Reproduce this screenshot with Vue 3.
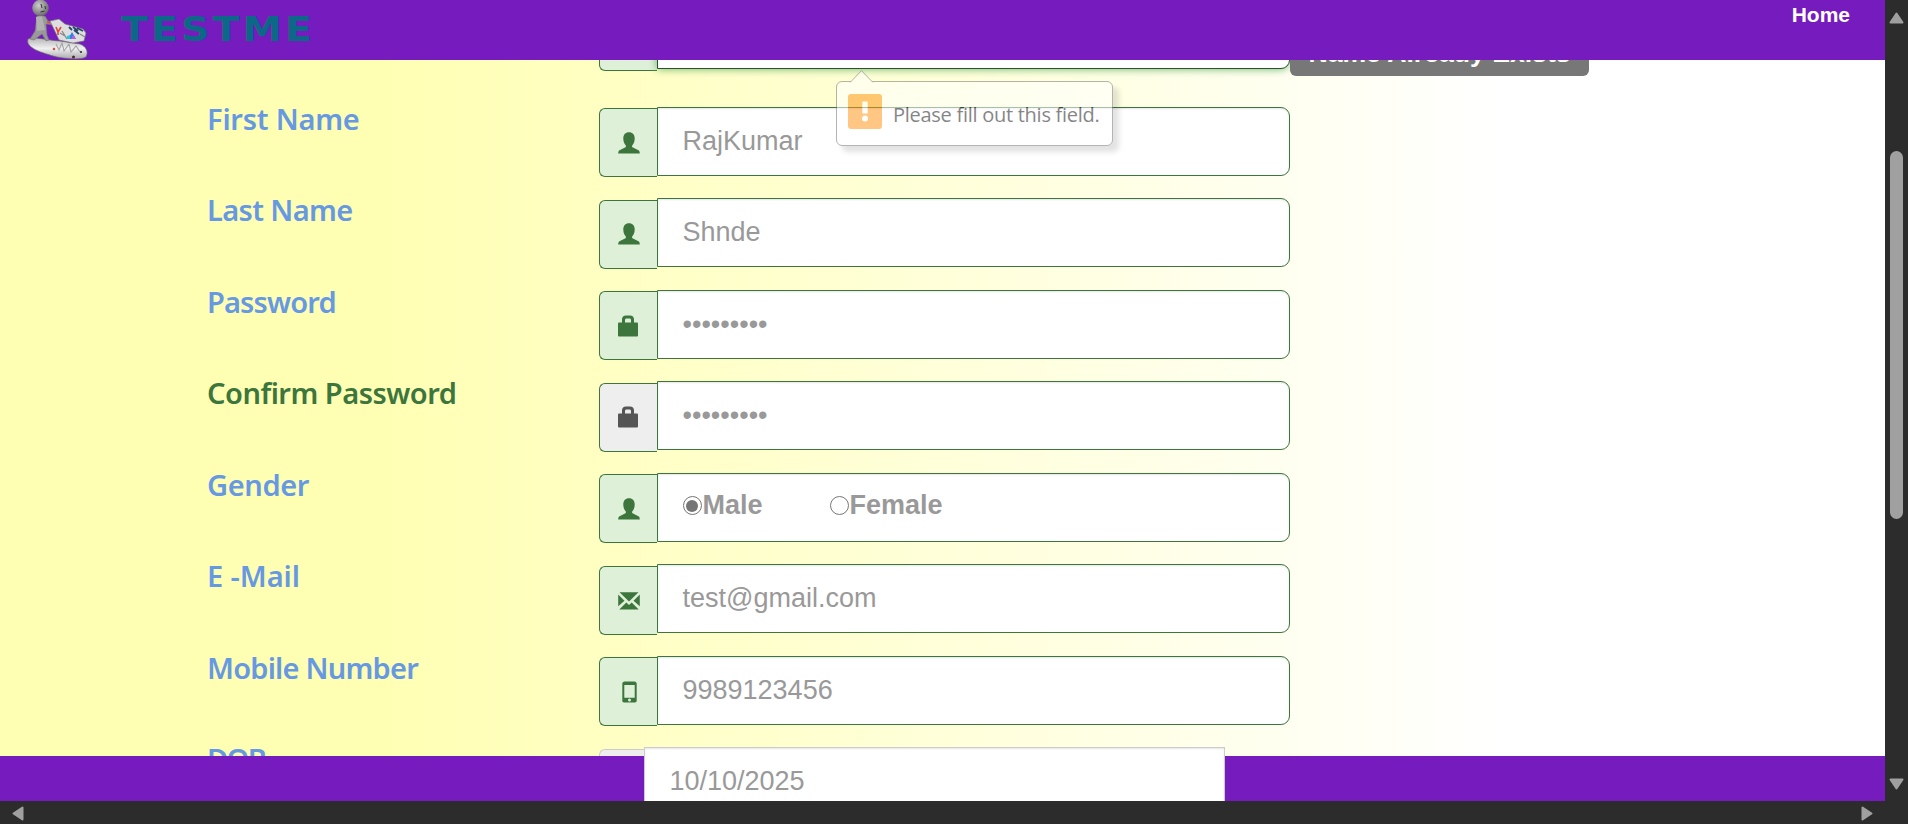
<script setup>
const rows = [
  { label: 'First Name', icon: 'user', value: 'RajKumar', track: '-0.22px' },
  { label: 'Last Name', icon: 'user', value: 'Shnde', track: '-0.63px' },
  { label: 'Password', icon: 'lock', value: '•••••••••', track: '-0.85px' },
  { label: 'Confirm Password', icon: 'lock', value: '•••••••••', track: '-0.5px', pending: true },
  { label: 'Gender', icon: 'user', radios: true, track: '-0.36px' },
  { label: 'E -Mail', icon: 'mail', value: 'test@gmail.com', track: '-0.07px' },
  { label: 'Mobile Number', icon: 'phone', value: '9989123456', track: '-0.77px' },
  { label: 'DOB', icon: '', value: '10/10/2025', track: '-1.7px', date: true },
]
</script>

<template>
  <div class="window">
    <main class="viewport">
      <div class="form">
        <div class="row top-row">
          <div class="label"></div>
          <div class="addon"></div>
          <div class="field focused"></div>
          <div class="badge">Name Already Exists</div>
        </div>
        <div v-for="r in rows" :key="r.label" class="row" :class="{ date: r.date, pending: r.pending }">
          <div class="label" :style="{ letterSpacing: r.track }">{{ r.label }}</div>
          <div class="addon">
            <svg v-if="r.icon === 'user'" width="22" height="22" viewBox="0 0 22 22">
              <path d="M11 .3C7.300.3 5.300 2.800 5.300 6.400c0 2.700.9 5.400 2.500 7 .3 1 .1 1.800-.8 2.200L1.500 18.200C.6 18.800.2 19.800.2 21.500h21.600c0-1.700-.4-2.700-1.300-3.300l-5.500-2.600c-.9-.4-1.100-1.200-.8-2.200 1.600-1.600 2.500-4.300 2.500-7C16.700 2.800 14.700.3 11 .3z" fill="currentColor" />
            </svg>
            <svg v-else-if="r.icon === 'lock'" class="lock" width="20" height="22" viewBox="0 0 20 22">
              <path fill-rule="evenodd" d="M4 7.500V4.500C4 2 5.500.5 8 .5h4c2.500 0 4 1.500 4 4v3h2.800c.7 0 1.200.5 1.200 1.200v11.500c0 .8-.5 1.300-1.200 1.300H1.300C.5 21.500 0 21 0 20.200V8.700C0 8 .5 7.500 1.300 7.500zM7 7.500h6V5.200c0-1.200-.6-1.700-1.500-1.700h-3C7.600 3.500 7 4 7 5.200z" fill="currentColor" />
            </svg>
            <svg v-else-if="r.icon === 'mail'" class="mail" width="22" height="18" viewBox="0 0 22 18">
              <path d="M1.500.2h19L11 9.600zM.2 2.400 6.500 8.700.2 14.200zM21.800 2.400v11.800l-6.300-5.500zM1.300 17.600l7-7.200 2.700 2.700 2.700-2.700 7 7.200z" fill="currentColor" />
            </svg>
            <svg v-else-if="r.icon === 'phone'" width="15" height="22" viewBox="0 0 15 22">
              <path fill-rule="evenodd" d="M2.700.5h9.600C14 .5 14.700 1.500 14.700 3v16.800c0 1.100-.6 1.700-1.700 1.700H2C.9 21.500.3 20.900.3 19.800V3C.3 1.500 1 .5 2.700.5zM2.300 4v12.700h10.400V4zM7.500 17.600a1.500 1.500 0 1 0 0 3 1.500 1.500 0 0 0 0-3z" fill="currentColor" />
            </svg>
          </div>
          <div class="field">
            <template v-if="r.radios">
              <span class="option"><i class="radio on"></i>Male</span>
              <span class="option"><i class="radio"></i>Female</span>
            </template>
            <template v-else>{{ r.value }}</template>
          </div>
        </div>
      </div>

      <header class="header">
        <svg class="logo" width="64" height="60" viewBox="0 0 64 60">
          <defs>
            <linearGradient id="base" x1="0" y1="0" x2="0" y2="1">
              <stop offset="0" stop-color="#b5b5b5" /><stop offset=".5" stop-color="#f0f0f0" /><stop offset="1" stop-color="#aaa" />
            </linearGradient>
            <radialGradient id="head" cx=".4" cy=".35" r=".7">
              <stop offset="0" stop-color="#cfcfcf" /><stop offset="1" stop-color="#626262" />
            </radialGradient>
          </defs>
          <path d="M3 39C9 36 20 40 35 41L55 44C61 46 64 52 61 57 57 60 42 59 32 57 17 53 0 48 3 39z" fill="url(#base)" stroke="#65636c" stroke-width=".7" />
          <path d="M12 16h8l3 5 6 1-1 3-7-1 1 11 2 5-3 1-4-7-8 6-4-1 5-8z" fill="#999" stroke="#737373" stroke-width=".6" />
          <path d="m11 17 6-1 3 14-8 1z" fill="#b2b2b2" />
          <circle cx="15.500" cy="8" r="8.300" fill="url(#head)" />
          <path d="m16 4 1 4m3-2 .5 3m-5 3 4-1" stroke="#333" fill="none" />
          <path d="M25 21 34 19 40 24 58 29 61 33 59 41 48 43 34 40z" fill="#dedede" stroke="#76717d" stroke-width=".7" />
          <path d="m31 27 2 5 3-5m-3 4v4m-11-13 3 1" stroke="#df473b" stroke-width="1.600" fill="none" />
          <path d="m44 27 3 3m1-3 5 4m-1-3 6 3m-9-1 5 4" stroke="#24466d" stroke-width="1.800" fill="none" />
          <path d="m43 39 4-7 4 7z" fill="#337ce5" /><path d="m46 39 2-4 3 4z" fill="#bd5ce1" /><path d="m42 36 3-1v4h-3z" fill="#20cce0" />
          <path d="m35 33 5 3m-3-5 5 8m13-5 5 3" stroke="#888" stroke-width="1.300" />
          <path d="m31 44 3 6 3-7 2 8 5-7 2 8 5-6 4 6" fill="none" stroke="#a5a5aa" stroke-width="1.100" />
          <circle cx="29" cy="49" r="1.300" fill="#cf5148" /><circle cx="56" cy="52" r="1" fill="#222" /><circle cx="48.500" cy="57" r="1.500" fill="#51282b" />
        </svg>
        <div class="brand">TESTME</div>
        <nav class="nav">Home</nav>
      </header>
      <footer class="footer"></footer>

      <div class="bubble">
        <svg class="tip" width="26" height="13" viewBox="0 0 26 13">
          <path d="M1 12.500 12.500.7 24 12.500" fill="#fff" stroke="#777" />
          <path d="M1.500 13h22" stroke="#fff" />
        </svg>
        <div class="warn">
          <svg width="34" height="35" viewBox="0 0 34 35"><path d="M14.300 7.500h5.400v12h-5.400z" fill="#fff" /><circle cx="17" cy="24.500" r="3" fill="#fff" /></svg>
        </div>
        <span class="message">Please fill out this field.</span>
      </div>
    </main>

    <aside class="vbar">
      <svg width="15" height="12" viewBox="0 0 15 12"><path d="M7.500 1.500 13.500 10.500h-12z" /></svg>
      <div class="thumb"></div>
      <svg class="down" width="15" height="12" viewBox="0 0 15 12"><path d="M1.500 1.500h12l-6 9z" /></svg>
    </aside>
    <div class="hbar">
      <svg width="12" height="15" viewBox="0 0 12 15"><path d="M10.500 1.500v12l-9-6z" /></svg>
      <svg width="12" height="15" viewBox="0 0 12 15"><path d="M1.500 1.500v12l9-6z" /></svg>
    </div>
  </div>
</template>

<style>
html, body { margin: 0; overflow: hidden; }
</style>
<style scoped>
* { box-sizing: border-box; }
.window {
  width: 1908px; height: 824px; overflow: hidden;
  display: grid; grid-template: 801px 23px / 1885px 23px;
  background: #2c2c2c;
  font-family: "Liberation Sans", Arial, sans-serif;
}
.viewport {
  position: relative; overflow: hidden;
  background: linear-gradient(90deg, #ffffb3 0, #ffffb3 370px, #fff 1500px);
}
.form { padding-left: 207px; }
.row {
  display: flex; align-items: flex-start;
  height: 69px; margin-bottom: 22.5px;
}
.top-row { margin-bottom: 37.700px; }
.label {
  width: 392px; flex: none; white-space: nowrap;
  font: 600 29px/40px "Noto Sans", "Open Sans", sans-serif;
  color: #6799e3; margin-top: -8px;
}
.addon {
  width: 58px; height: 69px; margin-top: 1.500px; flex: none;
  display: flex; align-items: center; padding-left: 18px;
  background: #dff0d8; color: #3c763d;
  border: 1px solid #3c763d; border-right: 0; border-radius: 6px 0 0 6px;
}
.field {
  width: 633px; height: 69px; flex: none;
  display: flex; align-items: center; padding: 0 24px 0 24.500px;
  background: #fff; border: 1px solid #3c763d; border-radius: 0 9px 9px 0;
  box-shadow: inset 0 1px 2px rgba(0, 0, 0, .1);
  font-size: 27px; color: #999; white-space: pre;
}
.focused { border-color: #2b542c; box-shadow: 0 0 8px #67b168; }
.pending .label { color: #3c763d; }
.pending .addon { background: #eee; color: #555; }
.addon svg { margin-top: 0; }
.addon .mail { margin-top: 1px; }
.addon svg[width="15"] { margin-left: 3.500px; }
.date .addon { width: 45px; background: #eee; border-color: #ccc; }
.date .field { position: relative; z-index: 3; width: 581px; border-color: #ccc; border-radius: 0; }
.option { display: flex; align-items: center; font-weight: bold; width: 147px; margin-top: -3px; }
.radio {
  width: 19.500px; height: 19.500px; margin-right: .5px; border-radius: 50%;
  border: 1.500px solid #767676; background: #fff; display: grid; place-items: center;
}
.radio.on::after { content: ""; width: 12px; height: 12px; border-radius: 50%; background: #767676; }
.badge {
  width: 299px; height: 76px; padding-top: 38px; text-align: center;
  background: #777; color: #fff; border-radius: 6px;
  font-weight: bold; font-size: 26.600px; line-height: 31px; white-space: nowrap;
}
.header {
  position: absolute; z-index: 2; left: 0; top: 0; width: 100%; height: 60px;
  display: flex; align-items: flex-start; background: #761bbe;
}
.logo { margin-left: 25px; flex: none; }
.brand {
  margin: 10px 0 0 32px; width: 190px;
  transform: scaleX(1.2); transform-origin: 0 0;
  font: bold 33px/40px "DejaVu Sans", sans-serif; letter-spacing: 2.500px; color: #0b6987;
}
.nav { margin: 3px 35px 0 auto; font-size: 21px; line-height: 24px; font-weight: bold; color: #fff; }
.footer { position: absolute; z-index: 2; left: 0; bottom: 0; width: 100%; height: 45px; background: #761bbe; }
.bubble {
  position: absolute; z-index: 4; left: 836px; top: 81px; width: 277px; height: 65px;
  display: flex; align-items: center; padding-left: 11px; gap: 11px;
  background: #fff; border: 1px solid #777; border-radius: 6px; opacity: .55;
  box-shadow: 6px 6px 5px rgba(0, 0, 0, .2);
  font: 20px/28px "Open Sans", "Noto Sans", sans-serif; color: #222; white-space: nowrap;
}
.message { letter-spacing: -.27px; margin-top: 2px; }
.tip { position: absolute; left: 12px; top: -12px; }
.warn { width: 34px; height: 35px; margin-top: -4px; border-radius: 3px; background: #ff9a1f; }
.warn svg { display: block; }
.vbar { display: flex; flex-direction: column; align-items: center; padding-top: 12px; }
.vbar svg, .hbar svg { fill: #a0a0a0; stroke: #a0a0a0; stroke-width: 2; stroke-linejoin: round; }
.thumb { width: 13px; height: 368px; margin-top: 127px; border-radius: 7px; background: #a0a0a0; }
.down { margin-top: auto; margin-bottom: 11px; }
.hbar { display: flex; justify-content: space-between; align-items: flex-start; padding: 5px 12px 0; }
</style>
